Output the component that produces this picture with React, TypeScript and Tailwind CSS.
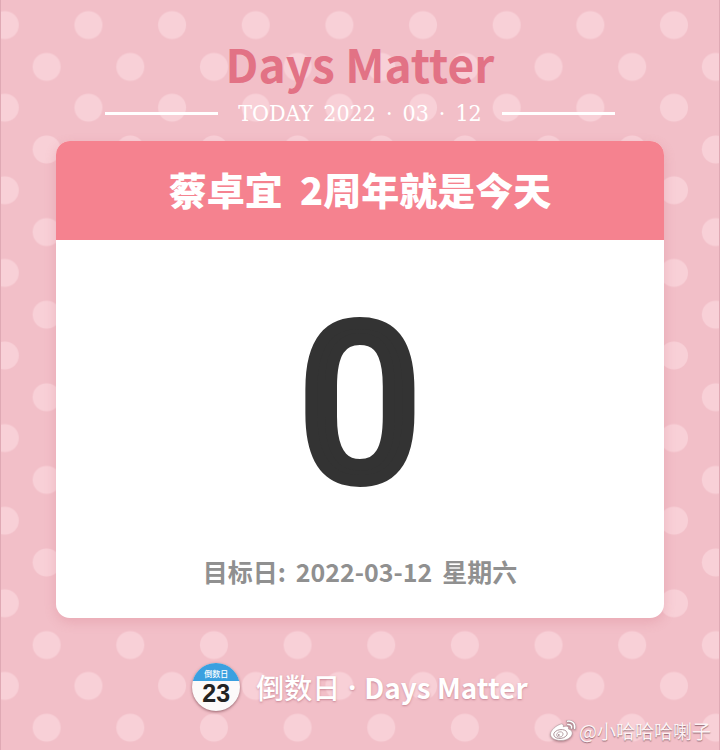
const dotColor = "#f8d0d7";

function DottedBackdrop() {
  return (
    <svg className="absolute inset-0 -z-10 h-full w-full" aria-hidden="true">
      <defs>
        <pattern id="dots" x="-38" y="-16.2" width="83.65" height="82.6" patternUnits="userSpaceOnUse">
          <circle cx="41.8" cy="41.3" r="14" fill={dotColor} />
          <circle cx="0" cy="0.5" r="14" fill={dotColor} />
          <circle cx="83.65" cy="0.5" r="14" fill={dotColor} />
          <circle cx="0" cy="83.1" r="14" fill={dotColor} />
          <circle cx="83.65" cy="83.1" r="14" fill={dotColor} />
        </pattern>
      </defs>
      <rect width="100%" height="100%" fill="url(#dots)" />
    </svg>
  );
}

function WeiboMark() {
  return (
    <svg className="h-6 w-7 drop-shadow-[0_1px_1px_rgba(90,50,60,0.5)]" viewBox="0 0 28 24" fill="none" aria-hidden="true">
      <path
        d="M11.5 5.2c1.8-.7 3.300.1 2.800 2.600 3-1.200 5.900-.9 5.100 2.200 2.600.8 4 2.300 3.800 4.400-.4 4-5.400 7.100-11.200 7.100C6 21.500 1.500 19 1.500 15.200c0-3.800 5.600-8.600 10-10Z"
        fill="#fff"
        stroke="#a08a8f"
        strokeWidth=".5"
      />
      <ellipse cx="11.500" cy="15" rx="6.800" ry="4.400" transform="rotate(-8 11.500 15)" stroke="#a98f95" strokeWidth=".9" />
      <path d="M7.600 15.800c.2-2.300 2.900-3.500 5-2.800 2 .7 1.900 3.100.2 4.300-2 1.400-5.300.9-5.200-1.500Z" stroke="#a98f95" strokeWidth=".8" />
      <circle cx="9.800" cy="16" r=".9" fill="#a98f95" />
      <path d="M18.500 2.200c4.600-.8 8.200 2.700 7.100 7.300M18.800 5.500c2.600-.4 4.300 1.200 3.700 3.600" stroke="#a08a8f" strokeWidth="2.200" strokeLinecap="round" />
      <path d="M18.500 2.200c4.600-.8 8.200 2.700 7.100 7.300M18.800 5.500c2.600-.4 4.300 1.200 3.700 3.600" stroke="#fff" strokeWidth="1.500" strokeLinecap="round" />
    </svg>
  );
}

function AppBadge() {
  return (
    <div className="flex size-12 flex-col overflow-hidden rounded-full bg-[#fcfafa] text-center shadow-[0_1px_3px_rgba(90,40,50,0.6)]">
      <div className="h-[18px] bg-[#3aa0e0] pt-1.5 text-[8px] leading-[10px] font-medium text-white">倒数日</div>
      <div className="font-['Liberation_Sans',sans-serif] text-[25px] leading-6 font-bold text-[#222]">23</div>
    </div>
  );
}

export default function App() {
  return (
    <div className="relative isolate flex min-h-screen flex-col overflow-hidden border-x border-[#dfa9b4] bg-[#f2bfc8] font-['Noto_Sans_CJK_SC',sans-serif]">
      <DottedBackdrop />

      <header className="pt-10">
        <h1 className="text-center text-[46px] leading-[46px] font-bold text-[#e27285]">Days Matter</h1>
        <div className="mx-[104px] mt-2.5 flex items-center gap-5">
          <span className="h-[3px] flex-1 bg-white" />
          <p className="flex gap-2.5 font-['DejaVu_Serif_Condensed','DejaVu_Serif',serif] text-[23px] leading-[34px] text-white [font-stretch:condensed]">
            <span>TODAY</span>
            <span>2022</span>
            <span>·</span>
            <span>03</span>
            <span>·</span>
            <span>12</span>
          </p>
          <span className="h-[3px] flex-1 bg-white" />
        </div>
      </header>

      <main className="mx-[55px] mt-[11px] overflow-hidden rounded-[14px] bg-white text-center shadow-[0_4px_12px_rgba(200,90,110,0.22)]">
        <h2 className="bg-[#f5828f] pt-[18px] pb-[22px] text-[38px] leading-[59px] font-black whitespace-pre text-white">
          蔡卓宜  2周年就是今天
        </h2>
        <p className="pt-9 font-['Roboto',sans-serif] text-[216px] leading-[260px] font-normal text-[#333] [-webkit-text-stroke:12px_#333]">0</p>
        <p className="flex justify-center gap-2.5 pt-4 pb-7 text-[25px] leading-[38px] font-bold text-[#909090]">
          <span>目标日:</span>
          <span>2022-03-12</span>
          <span>星期六</span>
        </p>
      </main>

      <footer className="mt-11 flex items-center justify-center gap-4">
        <AppBadge />
        <p className="flex items-center gap-2 text-[28px] leading-[50px] text-white text-shadow-[0_1px_2px_rgba(160,80,100,0.5)]">
          <span className="font-medium">倒数日</span>
          <span className="font-['Noto_Sans',sans-serif] font-bold">·</span>
          <span className="font-bold">Days Matter</span>
        </p>
      </footer>

      <div className="mt-auto flex items-center justify-end gap-0.5 pr-2 pb-1">
        <WeiboMark />
        <span className="text-[19px] leading-[30px] text-[#fdf3f5] text-shadow-[0_1px_1px_rgba(90,50,60,0.6)]">@小哈哈哈喇子</span>
      </div>
    </div>
  );
}
